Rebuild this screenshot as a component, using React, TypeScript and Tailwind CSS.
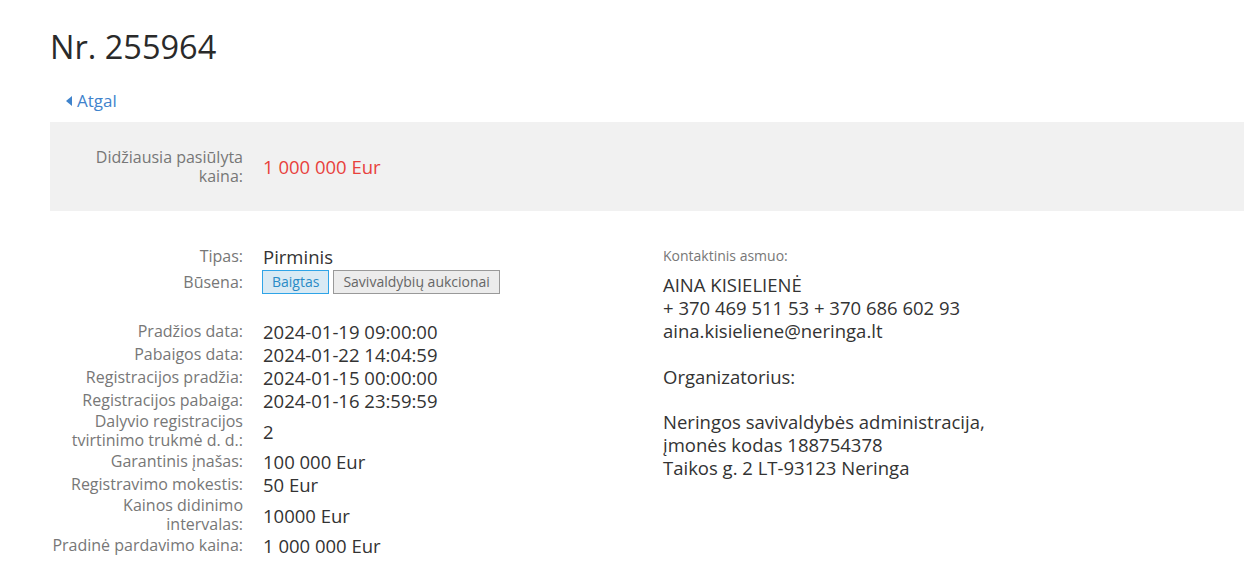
import React from "react";

const Label = ({ children }: { children: React.ReactNode }) => (
  <div className="w-[193px] shrink-0 text-right text-[16px] leading-[19px] text-[#777]">{children}</div>
);

const Row = ({ label, value }: { label: React.ReactNode; value: React.ReactNode }) => (
  <div className="flex items-center">
    <Label>{label}</Label>
    <div className="ml-[20px] text-[18.5px] leading-[23px] text-[#333]">{value}</div>
  </div>
);

export default function App() {
  return (
    <div className="min-h-[587px] bg-white" style={{ fontFamily: '"Open Sans", sans-serif' }}>
      <div className="pl-[50px]">
        <h1 className="pt-[27px] text-[32.5px] leading-[40px] text-[#2a2a2a]">Nr. 255964</h1>
        <div className="mt-[22px] flex items-center pl-[16px] text-[17px] leading-[24px] text-[#3f83cc]">
          <svg width="6" height="10" viewBox="0 0 6 10" className="mr-[5px]">
            <path d="M6 0 L0 5 L6 10 Z" fill="#3f83cc" />
          </svg>
          <span>Atgal</span>
        </div>
        <div className="mt-[9px] flex h-[89px] items-center bg-[#f1f1f1]">
          <Label>
            Didžiausia pasiūlyta
            <br />
            kaina:
          </Label>
          <div className="ml-[20px] -mt-[1px] text-[18.5px] leading-[23px] text-[#e8413c]">1 000 000 Eur</div>
        </div>
        <div className="mt-[34px] flex">
          <div className="w-[613px] shrink-0">
            <Row label="Tipas:" value="Pirminis" />
            <div className="mt-[2px] flex items-center">
              <Label>Būsena:</Label>
              <div className="ml-[19px] flex gap-[4px]">
                <span className="border border-[#2fa4e7] bg-[#d9eaf4] px-[9px] text-[14px] leading-[22px] text-[#2a8ac6]">
                  Baigtas
                </span>
                <span className="border border-[#999] bg-[#ececec] px-[9px] text-[14px] leading-[22px] text-[#666]">
                  Savivaldybių aukcionai
                </span>
              </div>
            </div>
            <div className="mt-[26px]">
              <Row label="Pradžios data:" value="2024-01-19 09:00:00" />
              <Row label="Pabaigos data:" value="2024-01-22 14:04:59" />
              <Row label="Registracijos pradžia:" value="2024-01-15 00:00:00" />
              <Row label="Registracijos pabaiga:" value="2024-01-16 23:59:59" />
              <Row
                label={
                  <>
                    Dalyvio registracijos
                    <br />
                    tvirtinimo trukmė d. d.:
                  </>
                }
                value="2"
              />
              <Row label="Garantinis įnašas:" value="100 000 Eur" />
              <Row label="Registravimo mokestis:" value="50 Eur" />
              <Row
                label={
                  <>
                    Kainos didinimo
                    <br />
                    intervalas:
                  </>
                }
                value="10000 Eur"
              />
              <Row label="Pradinė pardavimo kaina:" value="1 000 000 Eur" />
            </div>
          </div>
          <div className="text-[#333]">
            <div className="pt-[1px] text-[14px] leading-[20px] text-[#777]">Kontaktinis asmuo:</div>
            <div className="mt-[7px] text-[18.5px] leading-[23px]">
              <div>AINA KISIELIENĖ</div>
              <div>+ 370 469 511 53 + 370 686 602 93</div>
              <div>aina.kisieliene@neringa.lt</div>
              <div className="h-[23px]" />
              <div>Organizatorius:</div>
              <div className="h-[22px]" />
              <div>Neringos savivaldybės administracija,</div>
              <div>įmonės kodas 188754378</div>
              <div>Taikos g. 2 LT-93123 Neringa</div>
            </div>
          </div>
        </div>
      </div>
    </div>
  );
}
